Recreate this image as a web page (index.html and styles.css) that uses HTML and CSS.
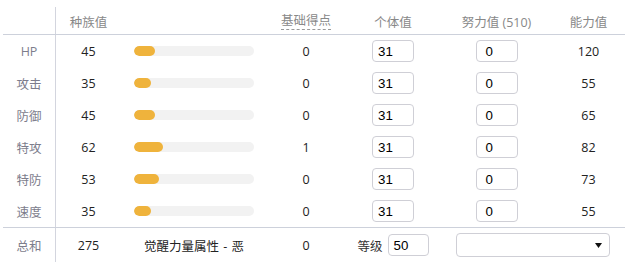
FILE: index.html
```html
<!DOCTYPE html>
<html lang="zh">
<head>
<meta charset="utf-8">
<link rel="stylesheet" href="styles.css">
</head>
<body>
<div class="stats">
  <div class="row head">
    <div class="c lab"></div>
    <div class="c base">种族值</div>
    <div class="c bar"></div>
    <div class="c pts"><span class="dotted">基础得点</span></div>
    <div class="c iv">个体值</div>
    <div class="c ev">努力值 (510)</div>
    <div class="c tot">能力值</div>
  </div>
  <div class="body">
    <div class="row">
      <div class="c lab">HP</div>
      <div class="c base num">45</div>
      <div class="c bar"><div class="track"><div class="fill" style="width:21.2px"></div></div></div>
      <div class="c pts num">0</div>
      <div class="c iv"><div class="inp iv-in">31</div></div>
      <div class="c ev"><div class="inp ev-in">0</div></div>
      <div class="c tot num">120</div>
    </div>
    <div class="row">
      <div class="c lab">攻击</div>
      <div class="c base num">35</div>
      <div class="c bar"><div class="track"><div class="fill" style="width:16.5px"></div></div></div>
      <div class="c pts num">0</div>
      <div class="c iv"><div class="inp iv-in">31</div></div>
      <div class="c ev"><div class="inp ev-in">0</div></div>
      <div class="c tot num">55</div>
    </div>
    <div class="row">
      <div class="c lab">防御</div>
      <div class="c base num">45</div>
      <div class="c bar"><div class="track"><div class="fill" style="width:21.2px"></div></div></div>
      <div class="c pts num">0</div>
      <div class="c iv"><div class="inp iv-in">31</div></div>
      <div class="c ev"><div class="inp ev-in">0</div></div>
      <div class="c tot num">65</div>
    </div>
    <div class="row">
      <div class="c lab">特攻</div>
      <div class="c base num">62</div>
      <div class="c bar"><div class="track"><div class="fill" style="width:29.2px"></div></div></div>
      <div class="c pts num">1</div>
      <div class="c iv"><div class="inp iv-in">31</div></div>
      <div class="c ev"><div class="inp ev-in">0</div></div>
      <div class="c tot num">82</div>
    </div>
    <div class="row">
      <div class="c lab">特防</div>
      <div class="c base num">53</div>
      <div class="c bar"><div class="track"><div class="fill" style="width:24.9px"></div></div></div>
      <div class="c pts num">0</div>
      <div class="c iv"><div class="inp iv-in">31</div></div>
      <div class="c ev"><div class="inp ev-in">0</div></div>
      <div class="c tot num">73</div>
    </div>
    <div class="row">
      <div class="c lab">速度</div>
      <div class="c base num">35</div>
      <div class="c bar"><div class="track"><div class="fill" style="width:16.5px"></div></div></div>
      <div class="c pts num">0</div>
      <div class="c iv"><div class="inp iv-in">31</div></div>
      <div class="c ev"><div class="inp ev-in">0</div></div>
      <div class="c tot num">55</div>
    </div>
  </div>
  <div class="row foot">
    <div class="c lab">总和</div>
    <div class="c base num">275</div>
    <div class="c bar hp">觉醒力量属性&nbsp;-&nbsp;恶</div>
    <div class="c pts num">0</div>
    <div class="c iv level"><span class="lvl">等级</span><div class="inp lv-in">50</div></div>
    <div class="c sel-cell">
      <div class="select"><svg class="arrow" width="7" height="5" viewBox="0 0 7 5"><path d="M0 0H7L3.5 5Z" fill="#111"/></svg></div>
    </div>
  </div>
</div>
</body>
</html>
```
FILE: styles.css
```css
html, body {
  margin: 0;
  padding: 0;
  background: #fff;
}
body {
  font-family: "Open Sans", "Noto Sans CJK SC", sans-serif;
  font-size: 12.5px;
  color: #333;
}
.stats {
  margin: 7px 0 0 3px;
  width: 622px;
}
.row {
  display: grid;
  grid-template-columns: 53px 65px 146px 78px 96px 111px 73px;
  height: 32px;
  align-items: center;
}
.c {
  height: 100%;
  display: flex;
  align-items: center;
  justify-content: center;
  white-space: nowrap;
}
.lab {
  border-right: 1px solid #d3d5de;
  color: #7d7d8c;
}
.head {
  height: 27px;
  border-bottom: 1px solid #cdd1db;
  color: #888;
}
.head .c { padding-top: 1px; box-sizing: border-box; }
.dotted {
  border-bottom: 1px dashed #999;
  line-height: 15px;
  padding-bottom: 1px;
}
.foot {
  height: 34px;
  border-top: 1px solid #cdd1db;
}
.num { color: #222; }
.track {
  width: 120px;
  height: 10px;
  border-radius: 5px;
  background: #f2f2f2;
  overflow: hidden;
}
.fill {
  height: 100%;
  border-radius: 5px;
  background: #efb33c;
}
.inp {
  box-sizing: border-box;
  width: 42px;
  height: 22px;
  border: 1px solid #cfcfd6;
  border-radius: 4px;
  font-family: "Liberation Sans", Arial, sans-serif;
  font-size: 13.3px;
  color: #000;
  display: flex;
  align-items: center;
  padding-left: 5px;
}
.ev-in { padding-left: 9px; }
.hp { color: #222; word-spacing: 1px; }
.level { gap: 5px; }
.lvl { color: #333; }
.lv-in { width: 41px; padding-left: 5px; }
.sel-cell {
  grid-column: 6 / 8;
  justify-content: flex-start;
  padding-left: 15px;
}
.select {
  box-sizing: border-box;
  width: 154px;
  height: 24px;
  border: 1px solid #cfcfd6;
  border-radius: 4px;
  display: flex;
  align-items: center;
  justify-content: flex-end;
  padding-right: 7px;
}
.arrow { display: block; }
```
